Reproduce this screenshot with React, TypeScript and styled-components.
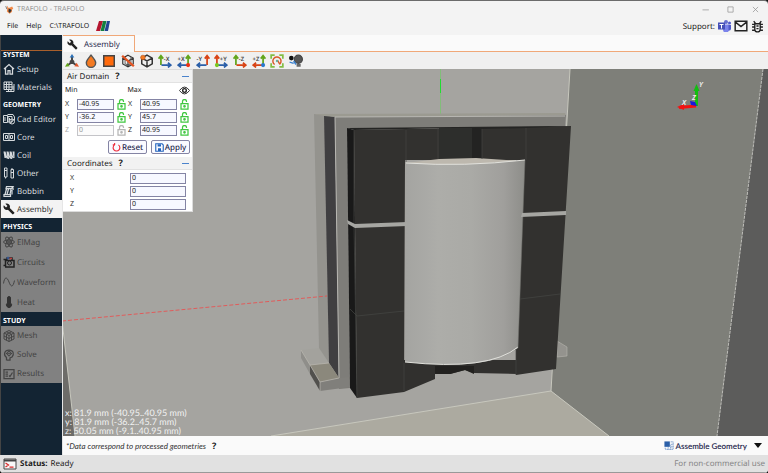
import React from "react";
import styled, { createGlobalStyle } from "styled-components";

const Global = createGlobalStyle`
  *, *::before, *::after { box-sizing: border-box; }
  html, body, #root { height: 100%; }
  body { margin: 0; background: #111; overflow: hidden; text-rendering: geometricPrecision; }
  body, button, input { font-family: "Noto Sans", "Open Sans", sans-serif; font-size: 8px; color: #222; text-rendering: geometricPrecision; }
  svg { display: block; flex: none; }
`;

const Window = styled.div`
  height: 100vh;
  display: flex;
  flex-direction: column;
  background: #f3f3f3;
  border-top: 1px solid #6b6b6b;
  border-radius: 4px;
  overflow: hidden;
`;
const TitleBar = styled.header`
  height: 16px;
  flex: none;
  display: flex;
  align-items: center;
  gap: 3px;
  padding: 0 8px 0 5px;
  color: #969696;
`;
const Title = styled.span`
  flex: 1;
  font-size: 7px;
`;
const WindowButtons = styled.div`
  display: flex;
  gap: 16px;
`;
const IconButton = styled.button`
  display: flex;
  align-items: center;
  justify-content: center;
  padding: 0;
  border: 0;
  background: none;
  color: inherit;
`;
const MenuBar = styled.nav`
  height: 18px;
  flex: none;
  display: flex;
  align-items: center;
  padding: 0 4px 0 7px;
`;
const MenuButton = styled.button`
  border: 0;
  padding: 0;
  margin-right: 8px;
  background: none;
  font-size: 7px;
`;
const Path = styled.span`
  flex: 1;
  display: flex;
  align-items: center;
  gap: 7px;
  font-size: 7px;
`;
const Support = styled.div`
  display: flex;
  align-items: center;
  gap: 3px;
`;
const Body = styled.div`
  flex: 1;
  min-height: 0;
  display: flex;
`;
const Sidebar = styled.aside`
  width: 63px;
  flex: none;
  background: #132433;
  border-left: 1px solid #444;
  border-right: 1px solid #e6e6e6;
`;
const SidebarTop = styled.div`
  height: 16px;
  border-bottom: 1px solid #a85f2c;
`;
const SectionTitle = styled.h2<{ $first?: boolean }>`
  margin: 0;
  padding-left: 2px;
  height: ${(p) => (p.$first ? 9 : 14)}px;
  padding-top: ${(p) => (p.$first ? 0 : 5)}px;
  font-size: 7px;
  line-height: 10px;
  font-weight: 700;
  color: #fff;
`;
const Section = styled.div<{ $disabled?: boolean }>`
  background: ${(p) => (p.$disabled ? "#818181" : "transparent")};
`;
const NavItem = styled.button<{ $active?: boolean; $h: number }>`
  width: 100%;
  height: ${(p) => p.$h}px;
  display: flex;
  align-items: center;
  gap: 2px;
  padding: 0 0 0 2px;
  border: 0;
  white-space: nowrap;
  background: ${(p) => (p.$active ? "#f3f3f3" : "transparent")};
  color: ${(p) => (p.$active ? "#333" : "#d5d9dc")};
  &:disabled { color: #444; }
`;
const Main = styled.main`
  flex: 1;
  min-width: 0;
  display: flex;
  flex-direction: column;
`;
const TabStrip = styled.div`
  height: 17px;
  flex: none;
  display: flex;
  background: #fafafa;
`;
const Tab = styled.button`
  width: 72px;
  display: flex;
  align-items: center;
  gap: 6px;
  padding: 0 0 0 4px;
  border: 1px solid #f0a878;
  border-bottom: 0;
  border-left: 0;
  background: #fafafa;
  color: #2d2d50;
`;
const TabRest = styled.div`
  flex: 1;
  border-bottom: 1px solid #f0a878;
`;
const Toolbar = styled.div`
  height: 17px;
  flex: none;
  background: #f0f0f0;
`;
const ToolRow = styled.div`
  width: 238px;
  height: 100%;
  margin-left: 2px;
  display: flex;
  align-items: center;
  justify-content: space-between;
`;
const Viewport = styled.section`
  flex: 1;
  min-height: 0;
  position: relative;
  overflow: hidden;
  background: #a5a4a0;
`;
const SceneSvg = styled.svg`
  width: 100%;
  height: 100%;
`;
const Readout = styled.div`
  position: absolute;
  left: 2px;
  bottom: 1px;
  white-space: pre-line;
  font-family: Lato, sans-serif;
  font-size: 9px;
  line-height: 9px;
  color: #f2f2f2;
`;
const Panel = styled.div`
  position: absolute;
  left: 0;
  top: 0;
  width: 130px;
  background: #fff;
  border: 1px solid #dcdcdc;
  border-left: 0;
`;
const PanelHead = styled.div`
  height: 13px;
  display: flex;
  align-items: center;
  padding: 0 3px 0 4px;
  background: #f2f2f2;
  border-bottom: 1px solid #e2e2e2;
  font-size: 8px;
`;
const Help = styled.button`
  flex: 1;
  text-align: left;
  padding: 0 0 0 6px;
  border: 0;
  background: none;
  font-size: 9px;
  line-height: 12px;
  font-weight: 700;
`;
const Minus = styled.button`
  width: 8px;
  height: 8px;
  padding: 0;
  border: 0;
  background: linear-gradient(#4b83cc, #4b83cc) center / 7px 1px no-repeat;
`;
const MinMax = styled.div`
  height: 15px;
  display: flex;
  align-items: center;
  padding: 0 2px;
  font-size: 7px;
`;
const MinMaxLabel = styled.span`
  width: 63px;
`;
const MaxLabel = styled.span`
  width: 52px;
`;
const DomainRow = styled.div`
  height: 13px;
  display: grid;
  grid-template-columns: 12px 37px 14px 12px 37px 14px;
  align-items: center;
  padding-left: 2px;
`;
const FieldLabel = styled.label<{ $dim?: boolean }>`
  font-size: 7px;
  line-height: 10px;
  color: ${(p) => (p.$dim ? "#aaa" : "#333")};
`;
const Field = styled.input`
  width: 100%;
  height: 11px;
  padding: 0 0 0 1px;
  border: 1px solid #8484a4;
  border-radius: 0;
  background: #f7f8ff;
  font-size: 7px;
  outline: 0;
  &:disabled { border-color: #c4c4c8; color: #999; background: #fbfbfb; }
`;
const Lock = styled.button`
  height: 11px;
  padding: 0 0 0 3px;
  border: 0;
  background: none;
`;
const Actions = styled.div`
  height: 20px;
  display: flex;
  justify-content: flex-end;
  align-items: center;
  gap: 4px;
  padding-right: 2px;
`;
const Action = styled.button`
  width: 39px;
  height: 14px;
  display: flex;
  align-items: center;
  justify-content: center;
  gap: 1px;
  padding: 0;
  border: 1px solid #8484a4;
  border-radius: 2px;
  background: #fafaff;
  color: #26264c;
  font-weight: 500;
`;
const CoordRows = styled.div`
  padding: 2px 0 0;
`;
const CoordRow = styled.div`
  height: 13px;
  display: grid;
  grid-template-columns: 60px 56px;
  align-items: center;
  padding-left: 7px;
`;
const FootBar = styled.div`
  height: 19px;
  flex: none;
  display: flex;
  align-items: center;
  padding: 0 6px 0 3px;
  background: #fafafa;
`;
const Note = styled.em`
  font-family: Lato, sans-serif;
  color: #333;
`;
const Assemble = styled.button`
  display: flex;
  align-items: center;
  gap: 1px;
  padding: 0;
  border: 0;
  background: none;
  color: #26264c;
  font-family: Lato, sans-serif;
  font-weight: 600;
`;
const Arrow = styled.svg`
  margin-left: 6px;
`;
const StatusBar = styled.footer`
  height: 18px;
  flex: none;
  display: flex;
  align-items: center;
  gap: 3px;
  padding: 0 3px;
  background: #e1e1e1;
  border-bottom: 1px solid #999;
`;
const License = styled.span`
  margin-left: auto;
  color: #858585;
`;

const Svg = ({ s = 14, children, label }: { s?: number; children: React.ReactNode; label?: string }) => (
  <svg width={s} height={s} viewBox="0 0 24 24" fill="none" stroke="currentColor" strokeWidth="2" aria-label={label}>
    {children}
  </svg>
);
const Wrench = ({ s = 12 }: { s?: number }) => (
  <Svg s={s}>
    <path stroke="none" fill="#222" d="M22.7 19 13.6 9.900c.9-2.300.4-5-1.500-6.900-2-2-5-2.400-7.400-1.300L9 6 6 9 1.600 4.700C.4 7.100.9 10.100 2.900 12.100c1.900 1.900 4.600 2.400 6.900 1.500l9.100 9.100c.4.4 1 .4 1.400 0l2.300-2.300c.5-.4.5-1.100.1-1.400z" />
  </Svg>
);

const navIcons: Record<string, React.ReactNode> = {
  Setup: <><path d="M2 12 12 3l10 9M5 10v12h5v-7h4v7h5V10" strokeWidth="2.500" /></>,
  Materials: <><path d="M2 2h16v15H2zM7 2v15M12 2v15M2 7h16M2 12h16M6 21h16V6M11 17v4M16 17v4M18 12h4M18 16h4" /></>,
  "Cad Editor": <><path d="M1 5h8v14H1zM4 8v8M9 3h11l3 5v7M10 7h8v11h-8zM13 10v5" /><circle cx="18" cy="17" r="5" /><path d="m14 21 8-8" /></>,
  Core: <path d="M1 5h22v14H1zM5 9h4v6H5zM15 9h4v6h-4zM12 5v14" />,
  Coil: <path fill="currentColor" stroke="none" d="M1 5h4l1 13H3zM7 5h4l1 15H9zM13 5h4l1 15h-3zM19 5h4v13h-2zM5 5l4 13-2 1L3 7zM11 5l4 13-2 1-3-12zM17 5l4 13-2 1-3-12z" />,
  Other: <path d="M3 2h5v18H3zM3 7h5M16 5h5v17h-5zM16 11h5M5 20v3M18 2v3" />,
  Bobbin: <path d="M7 3h13l-3 4H6zM7 8 4 19M11 8 8 19M16 8l-2 11M2 19h13v4H2zM18 10v9M20 5v5" strokeWidth="2.500" />,
  ElMag: <><circle cx="12" cy="12" r="2" /><ellipse cx="12" cy="12" rx="11" ry="4" /><ellipse cx="12" cy="12" rx="11" ry="4" transform="rotate(60 12 12)" /><ellipse cx="12" cy="12" rx="11" ry="4" transform="rotate(120 12 12)" /></>,
  Circuits: <><path d="M1 7h4v12H1M5 9h4M19 9h3v13H4M8 4h10v5H8z" stroke="#222" strokeWidth="3" /><circle cx="13" cy="14" r="4" fill="#777" stroke="#222" /><circle cx="10" cy="4" r="2" stroke="#3a62a5" /><path d="M13 5h5" stroke="#bb4040" strokeWidth="3" /></>,
  Waveform: <path d="M1 15C3 1 8 1 12 12s8 11 11-3" />,
  Heat: <path fill="#333" stroke="#333" d="M9 4a3 3 0 0 1 6 0v10a5 5 0 1 1-6 0z" />,
  Mesh: <path d="m12 1 10 5v12l-10 5-10-5V6zM2 6l10 5 10-5M12 11v12M7 3.500l10 5v12M17 3.500l-10 5v12M2 12l10 5 10-5" />,
  Solve: <><path d="M7 23v-6C0 11 3 2 12 2s11 8 6 14l-4 2v4H8" strokeWidth="2.500" /><circle cx="12" cy="9" r="4" /><path d="M12 3v3M12 12v3M6 9h3M15 9h3" /><circle cx="12" cy="9" r="1" /></>,
  Results: <path d="M2 3h20v18H2zM5 8h5M5 12h5M5 16h5M12 15l2 2 5-8" strokeWidth="2.500" />,
};

const sections = [
  { title: "SYSTEM", items: ["Setup", "Materials"], h: 18 },
  { title: "GEOMETRY", items: ["Cad Editor", "Core", "Coil", "Other", "Bobbin", "Assembly"], h: 18 },
  { title: "PHYSICS", items: ["ElMag", "Circuits", "Waveform", "Heat"], h: 20, disabled: true },
  { title: "STUDY", items: ["Mesh", "Solve", "Results"], h: 19, disabled: true },
];

type AxisProps = { text: string; up: string; across: string; flip?: boolean; dot?: string };
const AxisIcon = ({ text, up, across, flip, dot }: AxisProps) => (
  <svg width="14" height="14" viewBox="0 0 24 24" fill="none" strokeWidth="3">
    <g transform={flip ? "translate(24 0) scale(-1 1)" : undefined}>
      <path stroke={up} d="M5 19V5M1 8l4-5 4 5" />
      <path stroke={across} d="M6 19h15M17 15l5 4-5 4" />
      {dot && <circle cx="5" cy="19" r="3.500" fill={dot} />}
    </g>
    <text x={flip ? 1 : 10} y="12" fontSize="10" fontWeight="600" fill="#444">{text}</text>
  </svg>
);
const cube = "m12 2 9 5v10l-9 5-9-5V7zM3 7l9 5 9-5M12 12v10";
const G = "#62a51c", R = "#d84315", B = "#2b5fa8";
const tools: [string, React.ReactNode][] = [
  ["Axes", <Svg><path d="M12 14V4" stroke="#333" strokeWidth="3" /><path d="m12 14-7 5M12 14l7 5" stroke="#444" strokeWidth="3" /><path d="m12 8-4 4v5h8v-5z" fill="#444" stroke="none" /><path d="m12 0-4 6h8z" fill="#2b70b8" stroke="none" /><path d="m0 22 4-7 4 6z" fill={G} stroke="none" /><path d="m24 22-4-7-4 6z" fill="#e0552a" stroke="none" /></Svg>],
  ["Transparency", <Svg><path d="M12 2C8 7 4 11 4 15a8 8 0 0 0 16 0c0-4-4-8-8-13z" fill="#f47a22" stroke="#555" strokeWidth="2.500" /></Svg>],
  ["Surface", <Svg><path d="M3 3h18v18H3z" fill="#ff6a0c" stroke="#444" strokeWidth="2.500" /></Svg>],
  ["Hide edges", <Svg><path d={cube} stroke="#333" /><path d="M7 5v12l10 3M17 5v12L7 20" stroke="#555" strokeWidth="1.500" /><path d="m2 3 20 18" stroke="#e55320" strokeWidth="4" /></Svg>],
  ["Box", <Svg><path d={cube} stroke="#333" strokeWidth="2.500" /><circle cx="5" cy="6" r="4" fill="#f47a22" stroke="#aa4b18" strokeWidth="1" /></Svg>],
  ["View -X", <AxisIcon text="-X" up={G} across={B} />],
  ["View +X", <AxisIcon text="+X" up={G} across={B} flip dot="#f03010" />],
  ["View -Y", <AxisIcon text="-Y" up={R} across={B} flip />],
  ["View +Y", <AxisIcon text="+Y" up={R} across={B} dot="#7bc820" />],
  ["View -Z", <AxisIcon text="-Z" up={G} across={R} />],
  ["View +Z", <AxisIcon text="+Z" up={G} across={R} flip dot="#2878d0" />],
  ["Fit", <Svg><path d="M2 8V2h6M16 2h6v6M22 16v6h-6M8 22H2v-6" stroke="#83bd45" strokeWidth="3" /><path d="M8 18a7 7 0 1 1 9-1M13 11l4 7" stroke="#d85a2a" strokeWidth="2.500" /><circle cx="12" cy="12" r="2" fill="#6a9" stroke="none" /></Svg>],
  ["Lighting", <Svg><circle cx="16" cy="9" r="7" fill="#555" stroke="#444" /><circle cx="4" cy="7" r="4" fill="#111" stroke="none" /><path d="m1 14 7 2M8 12l4 6" stroke="#3b82d0" strokeWidth="2.500" /><path d="M13 17h7v5h-7z" fill="#666" stroke="none" /></Svg>],
];

const LockIcon = ({ dim }: { dim?: boolean }) => (
  <svg width="9" height="11" viewBox="0 0 18 22" fill="none" stroke={dim ? "#b5b5b5" : "#41c741"} strokeWidth="2.500">
    <path d="M2 9h14v11H2zM5 9V5a4 4 0 0 1 8 0v1" />
    <circle cx="9" cy="14.500" r="1.500" />
  </svg>
);

const domain = [
  { axis: "X", min: "-40.95", max: "40.95" },
  { axis: "Y", min: "-36.2", max: "45.7" },
  { axis: "Z", min: "0", max: "40.95", dim: true },
];

const Scene = () => (
  <SceneSvg viewBox="63 69 705 367" preserveAspectRatio="xMidYMid slice" aria-label="Transformer model">
    <defs>
      <linearGradient id="winding" x1="0" x2="1">
        <stop offset="0" stopColor="#a4a4a1" />
        <stop offset="0.28" stopColor="#adada9" />
        <stop offset="0.55" stopColor="#aaaaa6" />
        <stop offset="0.82" stopColor="#a09f9c" />
        <stop offset="1" stopColor="#8d8d89" />
      </linearGradient>
    </defs>
    <path fill="#a5a4a0" d="M62 69h510v367H62z" />
    <path fill="#7e7f79" d="M570 69h193l-46 367H609l-58-45z" />
    <path fill="#5c5c5b" d="M763 69h5v367h-51z" />
    <path fill="#acaaa0" d="M271 436 551 391l58 45z" />
    <path fill="#6d6c69" d="M62 320 75 436H62z" />
    <path fill="none" stroke="#c7c7bd" d="M271 436 551 391l58 45M570 69l-19 322M62 320l13 116" />
    <path fill="none" stroke="#bdbdb8" strokeDasharray="3 1" d="m763 69-46 367" />
    <path stroke="#72c96a" strokeWidth=".7" d="M440.500 69v45" />
    <path stroke="#20dd30" d="M440.500 79v14" />
    <path fill="#94938e" stroke="#b7b6af" strokeWidth=".6" d="m557 341 10 6v9l-10 1z" />
    <path fill="#a3a29d" d="m301 350 18-2 10 15-19 2z" />
    <path fill="#94938e" d="m314 114 11 1 4 248-10-15z" />
    <path fill="#403f41" d="m324 115 11 2 4 261-10-15z" />
    <path fill="#7e7d79" d="m335 117 231-2-1 13-218 1 3 259-11 1z" />
    <path fill="#9b9a91" d="m314 114 251-1 1 2-231 2-11-1z" />
    <path fill="none" stroke="#b8b7b2" d="m565 116-230 1 4 261" />
    <path stroke="#ef4949" strokeWidth=".8" strokeDasharray="4 2" d="m62 321 265-25" />
    <path fill="#8b887c" d="m310 365 19-2 10 15-19 4z" />
    <path fill="#807f7b" d="m320 382 19-4 11-1v10l-30 4z" />
    <path fill="#8f8e8a" d="m301 350 9 15v9l-9-16z" />
    <path fill="#51504d" d="m310 365 10 17v9l-10-17z" />
    <path fill="none" stroke="#bbb9b1" strokeWidth=".7" d="m301 350 9 15 19-2M310 365l10 17 19-4M320 382v9" />
    <path fill="#191919" d="m347 128 7 2 3 268-7-10z" />
    <path fill="#32312f" d="m354 130 217-4-15 243-40 6V160H405l-1 232-47 6z" />
    <path fill="#2d2e2c" d="M439 128h33v32h-33z" />
    <path fill="#232322" d="M472 128h10v32h-10z" />
    <path fill="#242423" d="m347 128 224-2-45 2-44 1-7-1h-36l-33 1-52 1z" />
    <path fill="#31302e" d="M404 360h113v14l-43-1-9-3-15 4h-15v5l-31 13z" />
    <path fill="#22211f" d="M435 366h39v8l-9-4-15 4h-15z" />
    <path fill="#bdb8ae" d="m406 163 33-4 37-1 48 3q-55 8-118 3" />
    <path fill="url(#winding)" d="M406 163q58 4 119-3l-7 188q-27 23-113 14z" />
    <path fill="none" stroke="#e1e1dc" d="M406 163q58 4 119-3M405 362q84 9 113-15" />
    <path fill="none" stroke="#71716d" strokeWidth=".5" d="m525 160-7 188" />
    <path fill="none" stroke="#454643" strokeWidth=".7" d="M354 130v94l3 174M406 130v32M438 128v31M482 129v30M526 128v32M404 363v28M516 349v26M350 309l7 7 47-5M520 299l40-5" />
    <path fill="#a6a6a2" d="m347 220 8 4 52-2v4l-52 2-7-4zM522 213l44-2v4l-45 2z" />
    <path stroke="#12bd12" strokeWidth="3" d="M696.500 106V91" />
    <path fill="#12bd12" d="m696.500 84-3 7h6z" />
    <path stroke="#f31212" strokeWidth="3" d="m696 106-17 1.500" />
    <path fill="#f31212" d="m677 107 7-3v6z" />
    <path fill="#1919dc" d="m690 101 5 1 2 4-6-1z" />
    <g fill="#f1f1f1" fontSize="7" fontWeight="600" fontStyle="italic">
      <text x="699" y="87">Y</text><text x="682" y="105">X</text><text x="692" y="100">Z</text>
    </g>
  </SceneSvg>
);

const Flame = () => (
  <Svg s={9}><path d="M5 1 10 8l9-4 3 5-4 4 1 5-7 5-7-6 1-7z" fill="#f48b49" stroke="none" /><path d="m10 9 8 4-5 8-4-4z" fill="#333" stroke="none" /><path d="m2 3 3 8" stroke="#555" /></Svg>
);

export default function App() {
  return (
    <>
      <Global />
      <Window>
        <TitleBar>
          <Flame />
          <Title>TRAFOLO - TRAFOLO</Title>
          <WindowButtons>
            <IconButton aria-label="Minimize"><Svg s={9}><path d="M4 13h17" /></Svg></IconButton>
            <IconButton aria-label="Maximize"><Svg s={9}><path d="M5 5h14v14H5z" /></Svg></IconButton>
            <IconButton aria-label="Close"><Svg s={9}><path d="m5 5 14 14M19 5 5 19" /></Svg></IconButton>
          </WindowButtons>
        </TitleBar>
        <MenuBar>
          <MenuButton>File</MenuButton>
          <MenuButton>Help</MenuButton>
          <Path>
            C:\TRAFOLO
            <svg width="14" height="10" viewBox="0 0 14 10"><path fill="#b51630" d="M3 0h4L4 10H0z" /><path fill="#15803f" d="M7 0h3.500L8 10H4.500z" /><path fill="#244592" d="M11 0h3l-2 10H8.500z" /></svg>
          </Path>
          <Support>
            Support:
            <IconButton aria-label="Teams">
              <svg width="13" height="12" viewBox="0 0 26 24"><circle cx="16" cy="4" r="4" fill="#6770cf" /><circle cx="23" cy="6" r="3" fill="#5059c9" /><path fill="#7b83eb" d="M9 9h13v9a6 6 0 0 1-12 2z" /><path fill="#5059c9" d="M21 10h5v7a4 4 0 0 1-5 4z" /><path fill="#4650b8" d="M0 5h14v14H0z" /><path fill="#fff" d="M3 8h8v2H8v7H6v-7H3z" /></svg>
            </IconButton>
            <IconButton aria-label="Mail"><Svg s={14}><path d="M2 4h20v16H2zM2 5l10 8 10-8" strokeWidth="2.500" /></Svg></IconButton>
            <IconButton aria-label="Report bug"><Svg s={13}><path d="M7 7h10v10a5 5 0 0 1-10 0zM8 6l-3-4M16 6l3-4M2 8h5M2 13h5M2 19h5M17 8h5M17 13h5M17 19h5M10 11h4M10 16h4" strokeWidth="2.500" /></Svg></IconButton>
          </Support>
        </MenuBar>
        <Body>
          <Sidebar>
            <SidebarTop />
            {sections.map((s, i) => (
              <React.Fragment key={s.title}>
                <SectionTitle $first={i === 0}>{s.title}</SectionTitle>
                <Section $disabled={s.disabled}>
                  {s.items.map((item) => (
                    <NavItem key={item} $h={s.h} $active={item === "Assembly"} disabled={s.disabled}>
                      {item === "Assembly" ? <Wrench s={12} /> : <Svg s={12}>{navIcons[item]}</Svg>}
                      {item}
                    </NavItem>
                  ))}
                </Section>
              </React.Fragment>
            ))}
          </Sidebar>
          <Main>
            <TabStrip>
              <Tab><Wrench s={11} />Assembly</Tab>
              <TabRest />
            </TabStrip>
            <Toolbar>
              <ToolRow>
                {tools.map(([name, icon]) => <IconButton key={name} aria-label={name}>{icon}</IconButton>)}
              </ToolRow>
            </Toolbar>
            <Viewport>
              <Scene />
              <Panel>
                <PanelHead>Air Domain<Help>?</Help><Minus aria-label="Collapse air domain" /></PanelHead>
                <MinMax>
                  <MinMaxLabel>Min</MinMaxLabel><MaxLabel>Max</MaxLabel>
                  <IconButton aria-label="Toggle visibility"><Svg s={11}><path d="M1 12q11-15 22 0-11 15-22 0z" /><circle cx="12" cy="12" r="4" strokeWidth="3" /></Svg></IconButton>
                </MinMax>
                {domain.map((d) => (
                  <DomainRow key={d.axis}>
                    <FieldLabel htmlFor={`min${d.axis}`} $dim={d.dim}>{d.axis}</FieldLabel>
                    <Field id={`min${d.axis}`} defaultValue={d.min} disabled={d.dim} />
                    <Lock aria-label={`Lock min ${d.axis}`} disabled={d.dim}><LockIcon dim={d.dim} /></Lock>
                    <FieldLabel htmlFor={`max${d.axis}`}>{d.axis}</FieldLabel>
                    <Field id={`max${d.axis}`} defaultValue={d.max} />
                    <Lock aria-label={`Lock max ${d.axis}`}><LockIcon /></Lock>
                  </DomainRow>
                ))}
                <Actions>
                  <Action><Svg s={9}><path d="M7 5a9 9 0 1 0 10 0M7 5V0M7 5H2" stroke="#ed2939" strokeWidth="3" /></Svg>Reset</Action>
                  <Action><Svg s={9}><path d="M2 2h17l3 3v17H2z" stroke="#2464bd" strokeWidth="3" /><path d="M7 3h9v6H7zM8 14h8v7H8z" fill="#2464bd" stroke="none" /></Svg>Apply</Action>
                </Actions>
                <PanelHead>Coordinates<Help>?</Help><Minus aria-label="Collapse coordinates" /></PanelHead>
                <CoordRows>
                  {["X", "Y", "Z"].map((a) => (
                    <CoordRow key={a}>
                      <FieldLabel htmlFor={`coord${a}`}>{a}</FieldLabel>
                      <Field id={`coord${a}`} defaultValue="0" />
                    </CoordRow>
                  ))}
                </CoordRows>
              </Panel>
              <Readout>{"x: 81.9 mm (-40.95..40.95 mm)\ny: 81.9 mm (-36.2..45.7 mm)\nz: 50.05 mm (-9.1..40.95 mm)"}</Readout>
            </Viewport>
            <FootBar>
              <Note>*Data correspond to processed geometries</Note>
              <Help>?</Help>
              <Assemble>
                <Svg s={10}><path d="M1 1h13v13H1z" fill="#2b5fa8" stroke="none" /><path d="M16 2h6v18H3v-5M16 8h6M16 14h6M10 15v6M16 10v11" stroke="#6a90c5" strokeDasharray="3 1" /></Svg>
                Assemble Geometry
                <Arrow width="8" height="6" viewBox="0 0 8 6"><path d="M0 0h8L4 5z" fill="#111" /></Arrow>
              </Assemble>
            </FootBar>
          </Main>
        </Body>
        <StatusBar>
          <svg width="14" height="12" viewBox="0 0 28 24" fill="none"><path d="M2 2h24v20H2z" fill="#f8f8f8" stroke="#444" strokeWidth="2" /><path d="M2 5h24" stroke="#444" strokeWidth="4" /><path d="m5 10 6 4-6 4M13 18h8" stroke="#d92b2b" strokeWidth="2.500" /></svg>
          <b>Status:</b>
          <span>Ready</span>
          <License>For non-commercial use</License>
        </StatusBar>
      </Window>
    </>
  );
}
